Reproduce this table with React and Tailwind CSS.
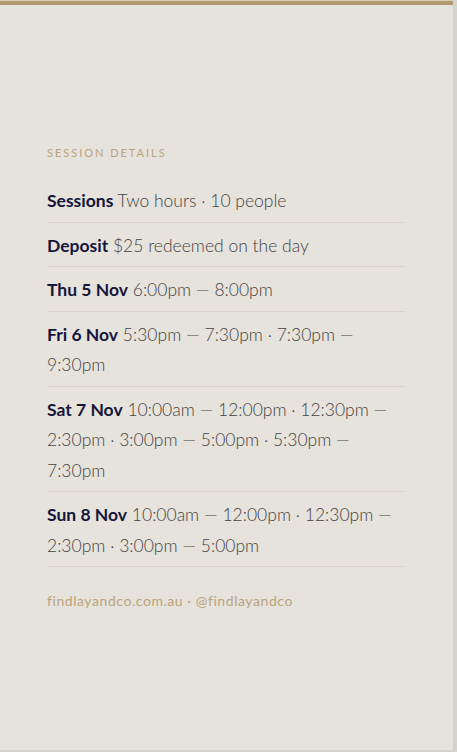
const rows = [
  { label: 'Sessions', text: 'Two hours · 10 people' },
  { label: 'Deposit', text: '$25 redeemed on the day' },
  { label: 'Thu 5 Nov', text: '6:00pm — 8:00pm' },
  { label: 'Fri 6 Nov', text: '5:30pm — 7:30pm · 7:30pm — 9:30pm' },
  { label: 'Sat 7 Nov', text: '10:00am — 12:00pm · 12:30pm — 2:30pm · 3:00pm — 5:00pm · 5:30pm — 7:30pm' },
  { label: 'Sun 8 Nov', text: '10:00am — 12:00pm · 12:30pm — 2:30pm · 3:00pm — 5:00pm' },
];

export default function App() {
  return (
    <div className="w-[457px] h-[752px] bg-[#d6d3cc] overflow-hidden">
      <div
        className="w-[453px] h-[750px] bg-[#e6e2dc] flex flex-col"
        style={{ fontFamily: "Lato, 'Open Sans', sans-serif" }}
      >
        {/* Top accent */}
        <div className="h-px bg-[#d9cdb3]" />
        <div className="h-[4px] bg-[#b09a6f]" />

        <div className="pt-[140px] pl-[47px] pr-[48px]">
          <p className="text-[11px] leading-[16px] tracking-[0.18em] text-[#b9a47c] uppercase mb-[17px]">
            Session details
          </p>

          <div>
            {rows.map((r) => (
              <div key={r.label} className="pt-[8px] pb-[5px] border-b border-[#d7d2ca]">
                <p className="text-[17.5px] leading-[30.5px] font-light text-[#444444]">
                  <span className="font-bold text-[#15163a]">{r.label}</span> {r.text}
                </p>
              </div>
            ))}
          </div>

          <p className="mt-[24px] text-[14px] leading-[20px] tracking-[0.04em] text-[#b9a47c]">
            findlayandco.com.au · @findlayandco
          </p>
        </div>
      </div>
    </div>
  );
}
